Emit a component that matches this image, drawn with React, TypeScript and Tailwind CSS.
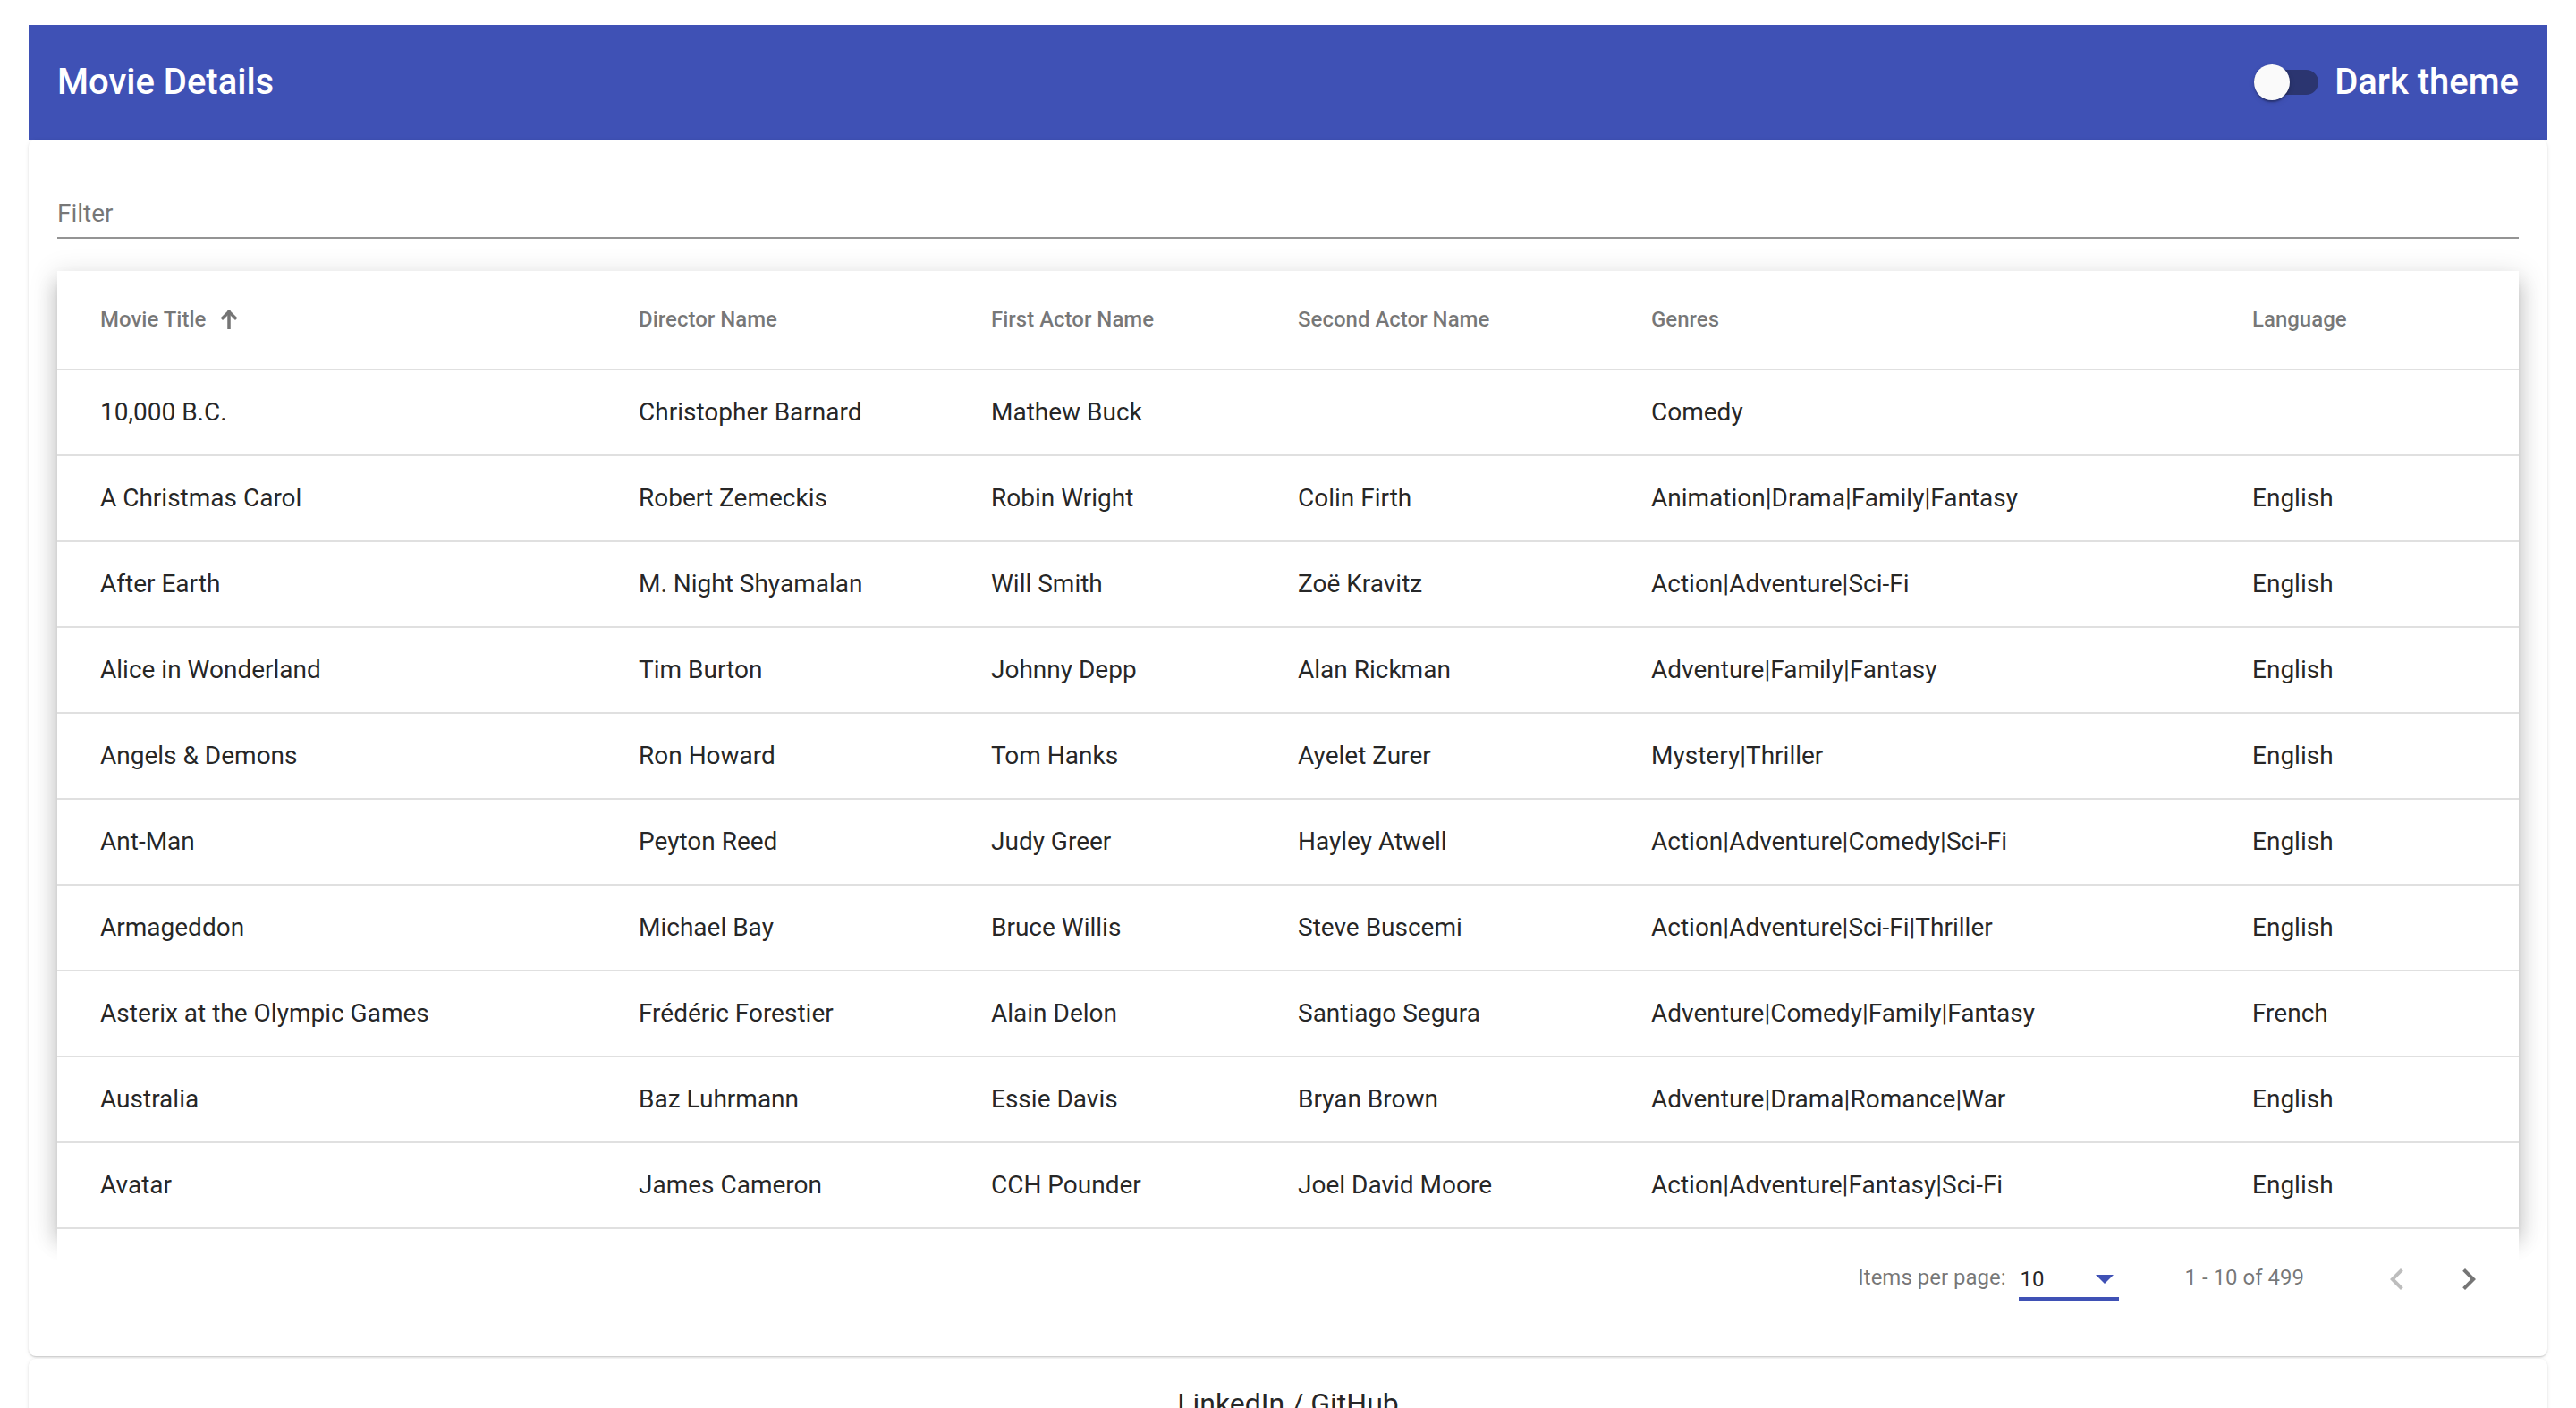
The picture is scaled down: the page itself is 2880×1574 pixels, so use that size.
type Movie = {
  title: string;
  director: string;
  actor1: string;
  actor2: string;
  genres: string;
  language: string;
};

const movies: Movie[] = [
  { title: '10,000 B.C.', director: 'Christopher Barnard', actor1: 'Mathew Buck', actor2: '', genres: 'Comedy', language: '' },
  { title: 'A Christmas Carol', director: 'Robert Zemeckis', actor1: 'Robin Wright', actor2: 'Colin Firth', genres: 'Animation|Drama|Family|Fantasy', language: 'English' },
  { title: 'After Earth', director: 'M. Night Shyamalan', actor1: 'Will Smith', actor2: 'Zoë Kravitz', genres: 'Action|Adventure|Sci-Fi', language: 'English' },
  { title: 'Alice in Wonderland', director: 'Tim Burton', actor1: 'Johnny Depp', actor2: 'Alan Rickman', genres: 'Adventure|Family|Fantasy', language: 'English' },
  { title: 'Angels & Demons', director: 'Ron Howard', actor1: 'Tom Hanks', actor2: 'Ayelet Zurer', genres: 'Mystery|Thriller', language: 'English' },
  { title: 'Ant-Man', director: 'Peyton Reed', actor1: 'Judy Greer', actor2: 'Hayley Atwell', genres: 'Action|Adventure|Comedy|Sci-Fi', language: 'English' },
  { title: 'Armageddon', director: 'Michael Bay', actor1: 'Bruce Willis', actor2: 'Steve Buscemi', genres: 'Action|Adventure|Sci-Fi|Thriller', language: 'English' },
  { title: 'Asterix at the Olympic Games', director: 'Frédéric Forestier', actor1: 'Alain Delon', actor2: 'Santiago Segura', genres: 'Adventure|Comedy|Family|Fantasy', language: 'French' },
  { title: 'Australia', director: 'Baz Luhrmann', actor1: 'Essie Davis', actor2: 'Bryan Brown', genres: 'Adventure|Drama|Romance|War', language: 'English' },
  { title: 'Avatar', director: 'James Cameron', actor1: 'CCH Pounder', actor2: 'Joel David Moore', genres: 'Action|Adventure|Fantasy|Sci-Fi', language: 'English' },
];

function SortArrow() {
  return (
    <svg width="20" height="22" viewBox="0 0 20 22" fill="none" stroke="#757575" strokeWidth="3.5" strokeLinecap="square" className="ml-[16px]">
      <line x1="10" y1="3" x2="10" y2="21" />
      <path d="M3 9.5L10 2.5L17 9.5" />
    </svg>
  );
}

function Chevron({ dir, disabled }: { dir: 'left' | 'right'; disabled?: boolean }) {
  return (
    <button type="button" className="w-[80px] h-[80px] flex items-center justify-center rounded-full">
      <svg width="48" height="48" viewBox="0 0 24 24" fill={disabled ? 'rgba(0,0,0,0.26)' : 'rgba(0,0,0,0.54)'}>
        {dir === 'left' ? (
          <path d="M15.41 7.41L14 6l-6 6 6 6 1.41-1.41L10.83 12z" />
        ) : (
          <path d="M10 6L8.59 7.41 13.17 12l-4.58 4.59L10 18l6-6z" />
        )}
      </svg>
    </button>
  );
}

function App() {
  const headers = ['Movie Title', 'Director Name', 'First Actor Name', 'Second Actor Name', 'Genres', 'Language'];

  return (
    <div className="min-h-screen bg-white px-[32px] pt-[28px] font-['Roboto',sans-serif] text-[rgba(0,0,0,0.87)]">
      <header className="h-[128px] bg-[#3f51b5] px-[32px] flex items-center justify-between text-white">
        <h1 className="text-[40px] font-medium leading-none">Movie Details</h1>
        <div className="flex items-center gap-[18px]">
          <div className="relative w-[72px] h-[40px] flex items-center">
            <div className="w-[72px] h-[28px] rounded-full bg-[#2b3570]" />
            <div className="absolute left-0 top-0 w-[40px] h-[40px] rounded-full bg-[#fafafa] shadow-[0_4px_2px_-2px_rgba(0,0,0,0.2),0_2px_2px_0_rgba(0,0,0,0.14),0_2px_6px_0_rgba(0,0,0,0.12)]" />
          </div>
          <span className="text-[40px] font-medium leading-none">Dark theme</span>
        </div>
      </header>

      <main className="bg-white rounded-[8px] px-[32px] pb-[30px] shadow-[0_2px_2px_-1px_rgba(0,0,0,0.12),0_1px_2px_0_rgba(0,0,0,0.08),0_1px_5px_0_rgba(0,0,0,0.08)]">
        <div className="pt-[65px]">
          <div className="h-[36px] leading-[36px] text-[28px] text-[rgba(0,0,0,0.54)]">Filter</div>
          <div className="mt-[8px] h-[2px] bg-[rgba(0,0,0,0.42)]" />
        </div>

        <div className="mt-[36px] bg-white shadow-[0_10px_10px_-6px_rgba(0,0,0,0.2),0_16px_20px_2px_rgba(0,0,0,0.14),0_6px_28px_4px_rgba(0,0,0,0.12)]">
          <table className="w-full table-fixed border-collapse">
            <colgroup>
              <col className="w-[650px]" />
              <col className="w-[394px]" />
              <col className="w-[343px]" />
              <col className="w-[395px]" />
              <col className="w-[672px]" />
              <col />
            </colgroup>
            <thead>
              <tr className="h-[110px] border-b-2 border-[#e0e0e0]">
                {headers.map((h, i) => (
                  <th
                    key={h}
                    className={`text-left text-[24px] font-medium text-[rgba(0,0,0,0.54)] p-0 pb-[2px] ${i === 0 ? 'pl-[48px]' : ''} ${i === 5 ? 'pr-[48px]' : ''}`}
                  >
                    {i === 0 ? (
                      <span className="flex items-center">
                        {h}
                        <SortArrow />
                      </span>
                    ) : (
                      h
                    )}
                  </th>
                ))}
              </tr>
            </thead>
            <tbody>
              {movies.map((m) => (
                <tr key={m.title} className="h-[96px] border-b-2 border-[#e0e0e0] text-[28px]">
                  <td className="pl-[48px]">{m.title}</td>
                  <td>{m.director}</td>
                  <td>{m.actor1}</td>
                  <td>{m.actor2}</td>
                  <td>{m.genres}</td>
                  <td className="pr-[48px]">{m.language}</td>
                </tr>
              ))}
            </tbody>
          </table>
        </div>

        <div className="relative bg-white h-[112px] flex items-center justify-end pr-[16px] text-[24px] text-[rgba(0,0,0,0.54)]">
          <span className="mr-[14px] mb-[4px]">Items per page:</span>
          <div className="w-[112px] mt-[6px] flex flex-col">
            <div className="flex items-center justify-between h-[36px]">
              <span className="text-[rgba(0,0,0,0.87)] pl-[2px]">10</span>
              <span className="mr-[6px] w-0 h-0 border-l-[10px] border-r-[10px] border-t-[10px] border-l-transparent border-r-transparent border-t-[#3f51b5]" />
            </div>
            <div className="mt-[2px] h-[4px] bg-[#3f51b5]" />
          </div>
          <span className="ml-[74px] mr-[64px] mb-[4px]">1 - 10 of 499</span>
          <Chevron dir="left" disabled />
          <Chevron dir="right" />
        </div>
      </main>

      <footer className="mt-[3px] bg-white rounded-[8px] pt-[26px] pb-[32px] text-center shadow-[0_2px_2px_-1px_rgba(0,0,0,0.12),0_1px_2px_0_rgba(0,0,0,0.08),0_1px_5px_0_rgba(0,0,0,0.08)]">
        <span className="text-[32px] leading-[48px] text-[rgba(0,0,0,0.87)]">LinkedIn / GitHub</span>
      </footer>
    </div>
  );
}

export default App;
